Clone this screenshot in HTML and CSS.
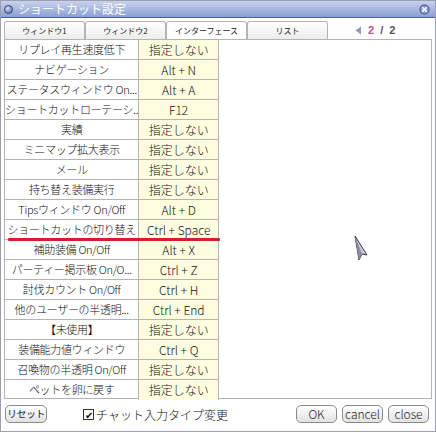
FILE: index.html
```html
<!DOCTYPE html>
<html>
<head>
<title>ショートカット設定</title>
<link rel="stylesheet" href="styles.css">
</head>
<body>

<div class="window">
    <div class="titlebar">
        <span class="title-icon"></span>
        <span class="title">ショートカット設定</span>
        <svg class="close-icon" width="11" height="11" viewBox="0 0 11 11">
            <circle cx="5.5" cy="5.5" r="5" fill="#3a4f8a"/>
            <circle cx="5.5" cy="5.5" r="4" fill="#8ea0d4"/>
            <path d="M3.3 3.3 L7.7 7.7 M7.7 3.3 L3.3 7.7" stroke="#fff" stroke-width="1.5"/>
        </svg>
    </div>

    <div class="tabs">
        <div class="tab">ウィンドウ1</div>
        <div class="tab">ウィンドウ2</div>
        <div class="tab active">インターフェース</div>
        <div class="tab">リスト</div>
        <div class="pager">
            <svg width="7" height="9" viewBox="0 0 7 9"><path d="M6 0.5 L0.5 4.5 L6 8.5 Z" fill="#8d99c6"/></svg>
            <span class="page-cur">2</span>
            <span class="page-sep">/</span>
            <span class="page-max">2</span>
        </div>
    </div>

    <div class="panel">
        <div class="list">
            <div class="row"><div class="name">リプレイ再生速度低下</div><div class="key">指定しない</div></div>
            <div class="row"><div class="name">ナビゲーション</div><div class="key">Alt + N</div></div>
            <div class="row"><div class="name">ステータスウィンドウ On...</div><div class="key">Alt + A</div></div>
            <div class="row"><div class="name">ショートカットローテーシ...</div><div class="key">F12</div></div>
            <div class="row"><div class="name">実績</div><div class="key">指定しない</div></div>
            <div class="row"><div class="name">ミニマップ拡大表示</div><div class="key">指定しない</div></div>
            <div class="row"><div class="name">メール</div><div class="key">指定しない</div></div>
            <div class="row"><div class="name">持ち替え装備実行</div><div class="key">指定しない</div></div>
            <div class="row"><div class="name">Tipsウィンドウ On/Off</div><div class="key">Alt + D</div></div>
            <div class="row marked"><div class="name">ショートカットの切り替え</div><div class="key">Ctrl + Space</div></div>
            <div class="row"><div class="name">補助装備 On/Off</div><div class="key">Alt + X</div></div>
            <div class="row"><div class="name">パーティー掲示板 On/O...</div><div class="key">Ctrl + Z</div></div>
            <div class="row"><div class="name">討伐カウント On/Off</div><div class="key">Ctrl + H</div></div>
            <div class="row"><div class="name">他のユーザーの半透明...</div><div class="key">Ctrl + End</div></div>
            <div class="row"><div class="name">【未使用】</div><div class="key">指定しない</div></div>
            <div class="row"><div class="name">装備能力値ウィンドウ</div><div class="key">Ctrl + Q</div></div>
            <div class="row"><div class="name">召喚物の半透明 On/Off</div><div class="key">指定しない</div></div>
            <div class="row"><div class="name">ペットを卵に戻す</div><div class="key">指定しない</div></div>
        </div>
        <svg class="cursor" width="14" height="26" viewBox="0 0 14 26">
            <path d="M1 1 L13 20 L8 19 L5 25 Z" fill="#c9c8dc" stroke="#3a3a4a" stroke-width="1"/>
            <path d="M1 1 L8 19 L5 25 Z" fill="#8d8aa4"/>
        </svg>
    </div>

    <div class="footer">
        <div class="btn reset">リセット</div>
        <label class="check"><span class="box">✔</span>チャット入力タイプ変更</label>
        <div class="spacer"></div>
        <div class="btn">OK</div>
        <div class="btn">cancel</div>
        <div class="btn">close</div>
    </div>
</div>

</body>
</html>
```

FILE: styles.css
```css
body {
    margin: 0;
    background: #fff;
    font-family: "Noto Sans CJK JP", sans-serif;
    font-weight: 300;
}
.window {
    width: 436px;
    height: 432px;
    box-sizing: border-box;
    border: 1px solid #9aa0b0;
    background: #fff;
    display: flex;
    flex-direction: column;
    overflow: hidden;
}
.titlebar {
    height: 16px;
    flex: none;
    background: linear-gradient(to bottom, #c8d2ee, #8d9fd2);
    border-bottom: 1px solid #4e5f95;
    display: flex;
    align-items: center;
    padding: 0 5px 0 3px;
}
.title-icon {
    width: 9px;
    height: 9px;
    border-radius: 50%;
    background: radial-gradient(circle at 35% 35%, #d8e0ff, #4a5b99);
    border: 1px solid #34437a;
    box-sizing: border-box;
    margin-right: 5px;
}
.title {
    color: #fff;
    font-size: 12px;
    font-weight: 400;
    line-height: 16px;
    flex: 1;
}
.tabs {
    height: 19px;
    flex: none;
    margin-top: 2px;
    padding-left: 3px;
    display: flex;
    align-items: flex-end;
}
.tab {
    width: 81px;
    height: 18px;
    box-sizing: border-box;
    border: 1px solid #b4b4b4;
    border-bottom: none;
    border-radius: 3px 3px 0 0;
    background: linear-gradient(to bottom, #ffffff, #ececec);
    font-size: 8px;
    font-weight: 400;
    text-align: center;
    line-height: 17px;
    color: #222;
}
.tab.active {
    background: #fff;
}
.pager {
    margin-left: 27px;
    display: flex;
    align-items: center;
    gap: 6px;
    height: 18px;
    font: bold 11px "Liberation Sans", sans-serif;
}
.page-cur {
    color: #d24b8a;
}
.page-sep, .page-max {
    color: #555;
}
.panel {
    position: relative;
    flex: none;
    margin: 0 3px;
    height: 360px;
    border: 1px solid #b4b4b4;
    box-sizing: border-box;
}
.list {
    width: 214px;
    display: flex;
    flex-direction: column;
}
.row {
    display: flex;
    height: 20px;
    box-sizing: border-box;
    border-bottom: 1px solid #b4b4b4;
    font-size: 11px;
    line-height: 19px;
    color: #111;
}
.row:last-child {
    border-bottom: none;
}
.name {
    width: 134px;
    border-right: 1px solid #b4b4b4;
    text-align: center;
    white-space: nowrap;
    overflow: hidden;
    letter-spacing: -0.3px;
}
.key {
    width: 79px;
    background: #fffde0;
    border-right: 1px solid #b4b4b4;
    text-align: center;
    white-space: nowrap;
    font-size: 12px;
}
.marked {
    position: relative;
}
.marked::after {
    content: "";
    position: absolute;
    left: 3px;
    right: -1px;
    bottom: -2px;
    height: 3px;
    background: #d0202c;
    border-radius: 1px;
}
.cursor {
    position: absolute;
    left: 349px;
    top: 195px;
}
.footer {
    display: flex;
    align-items: center;
    padding: 6px 6px 0 4px;
    gap: 5px;
}
.btn {
    width: 41px;
    height: 18px;
    box-sizing: border-box;
    border: 1px solid #8a8a8a;
    border-radius: 5px;
    background: linear-gradient(to bottom, #ffffff, #e2e2e2);
    font-size: 12px;
    line-height: 16px;
    text-align: center;
    color: #222;
}
.btn.reset {
    font-size: 10px;
    font-weight: 400;
    width: 42px;
    letter-spacing: -0.5px;
    white-space: nowrap;
}
.check {
    margin-left: 31px;
    font-size: 12px;
    display: flex;
    align-items: center;
    gap: 2px;
    color: #111;
}
.box {
    width: 11px;
    height: 11px;
    border: 1px solid #333;
    box-sizing: border-box;
    font-size: 10px;
    line-height: 9px;
    text-align: center;
    color: #111;
}
.spacer {
    flex: 1;
}
```
